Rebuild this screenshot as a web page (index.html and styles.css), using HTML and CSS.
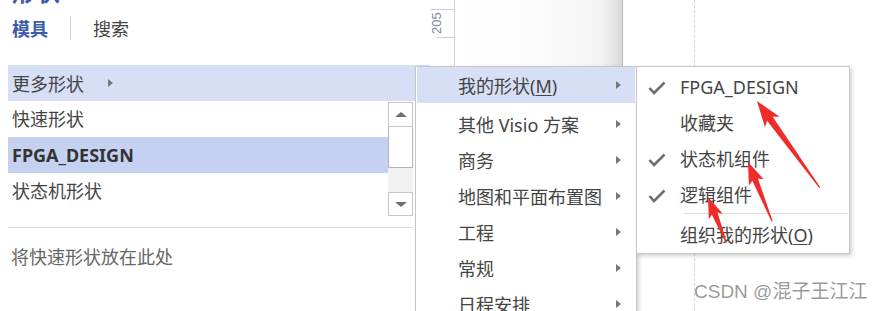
FILE: index.html
```html
<!DOCTYPE html>
<html>
<head>
	<meta charset="utf-8" />
	<title>形状</title>
	<link rel="stylesheet" href="styles.css">
</head>
<body>
	<div class="app">
		<div class="shapes">
			<div class="shapes-title">形状</div>
			<div class="tabs">
				<span class="tab active">模具</span>
				<span class="tab-sep"></span>
				<span class="tab">搜索</span>
			</div>
			<div class="more-row">更多形状<span class="tri-right"></span></div>
			<div class="stencils">
				<ul class="stencil-list">
					<li>快速形状</li>
					<li class="current">FPGA_DESIGN</li>
					<li>状态机形状</li>
				</ul>
				<div class="scrollbar">
					<div class="sb-btn"><span class="tri-up"></span></div>
					<div class="sb-thumb"></div>
					<div class="sb-track"></div>
					<div class="sb-btn"><span class="tri-down"></span></div>
				</div>
			</div>
			<div class="drop-hint">将快速形状放在此处</div>
		</div>
		<div class="ruler">
			<div class="tick"></div>
			<div class="ruler-label">205</div>
			<div class="tick short"></div>
		</div>
		<div class="page-edge"></div>
		<div class="canvas">
			<div class="guide"></div>
		</div>
	</div>

	<ul class="menu menu-main">
		<li class="hover"><span>我的形状(<u>M</u>)</span><span class="tri-right"></span></li>
		<li><span>其他 Visio 方案</span><span class="tri-right"></span></li>
		<li><span>商务</span><span class="tri-right"></span></li>
		<li><span>地图和平面布置图</span><span class="tri-right"></span></li>
		<li><span>工程</span><span class="tri-right"></span></li>
		<li><span>常规</span><span class="tri-right"></span></li>
		<li><span>日程安排</span><span class="tri-right"></span></li>
	</ul>

	<ul class="menu menu-sub">
		<li class="checked">
			<svg class="check" width="18" height="14" viewBox="0 0 18 14"><polyline points="1.5,7 6,12 16.5,1.5" /></svg>
			FPGA_DESIGN
		</li>
		<li>收藏夹</li>
		<li class="checked">
			<svg class="check" width="18" height="14" viewBox="0 0 18 14"><polyline points="1.5,7 6,12 16.5,1.5" /></svg>
			状态机组件
		</li>
		<li class="checked">
			<svg class="check" width="18" height="14" viewBox="0 0 18 14"><polyline points="1.5,7 6,12 16.5,1.5" /></svg>
			逻辑组件
		</li>
		<li class="sep"></li>
		<li>组织我的形状(<u>O</u>)</li>
	</ul>

	<svg class="marks" width="881" height="311" viewBox="0 0 881 311">
		<g transform="translate(757 101) rotate(54.1)">
			<polygon points="0,0 26,-9 22,-3.5 107,-0.6 107,0.6 22,3.5 26,9" />
		</g>
		<g transform="translate(748 162) rotate(67.9)">
			<polygon points="0,0 22,-8 19,-3 64,-0.6 64,0.6 19,3 22,8" />
		</g>
		<g transform="translate(708 197) rotate(68.2)">
			<polygon points="0,0 21,-7.5 18,-3 49,-0.6 49,0.6 18,3 21,7.5" />
		</g>
	</svg>

	<div class="watermark">CSDN @混子王江江</div>
</body>
</html>
```

FILE: styles.css
```css
body,ul,li{
	margin: 0;
	padding: 0;
}
li{
	list-style: none;
}
body{
	width: 881px;
	height: 311px;
	overflow: hidden;
	position: relative;
	background: #fff;
	color: #444;
	font-family: "Noto Sans", "Noto Sans CJK SC", sans-serif;
	font-size: 18px;
}
.app{
	display: flex;
	height: 311px;
}

/* shapes pane */
.shapes{
	width: 422px;
	padding-left: 8px;
	flex-shrink: 0;
}
.shapes-title{
	height: 24px;line-height: 24px;
	margin-top: -20px;
	padding-left: 4px;
	font-size: 24px;
	font-weight: bold;
	color: #3d5ca8;
}
.tabs{
	display: flex;
	align-items: center;
	height: 24px;
	margin-top: 12px;
	padding-left: 4px;
	font-size: 18px;
}
.tab{
	color: #444;
}
.tab.active{
	color: #3d5ca8;
	font-weight: bold;
}
.tab-sep{
	width: 1px;height: 24px;
	margin: 0 22px;
	background: #d4d4d4;
}
.more-row{
	display: flex;
	align-items: center;
	height: 36px;
	margin-top: 25px;
	padding-left: 4px;
	background: #d6dff5;
}
.more-row .tri-right{
	margin-left: 24px;
}
.tri-right{
	width: 0;height: 0;
	border-top: 4px solid transparent;
	border-bottom: 4px solid transparent;
	border-left: 5px solid #777;
}
.stencils{
	display: flex;
	width: 405px;
	height: 116px;
	border-bottom: 1px solid #dcdcdc;
	padding-bottom: 10px;
}
.stencil-list{
	width: 380px;
}
.stencil-list li{
	height: 36px;line-height: 36px;
	padding-left: 4px;
}
.stencil-list .current{
	background: #c5d1f1;
	font-weight: bold;
	color: #333;
}
.scrollbar{
	width: 25px;
	height: 114px;
	margin-top: 1px;
	display: flex;
	flex-direction: column;
}
.sb-btn{
	box-sizing: border-box;
	height: 25px;
	border: 1px solid #c6c6c6;
	background: #fff;
	display: flex;
	align-items: center;
	justify-content: center;
}
.sb-btn:last-child{
	height: 24px;
}
.tri-up{
	border-left: 6px solid transparent;
	border-right: 6px solid transparent;
	border-bottom: 5px solid #6e6e6e;
}
.tri-down{
	border-left: 6px solid transparent;
	border-right: 6px solid transparent;
	border-top: 5px solid #6e6e6e;
}
.sb-thumb{
	box-sizing: border-box;
	height: 41px;
	border: 1px solid #b4b4b4;
	border-top: 0;
	background: #fff;
}
.sb-track{
	height: 24px;
	background: #f1f1f1;
}
.drop-hint{
	margin-top: 17px;
	padding-left: 3px;
	line-height: 24px;
	color: #666;
}

/* ruler + page */
.ruler{
	width: 24px;
	flex-shrink: 0;
	padding-top: 9px;
	border-right: 1px solid #d4d4d4;
}
.tick{
	border-top: 1px solid #cfcfcf;
}
.tick.short{
	margin-left: 7px;
}
.ruler-label{
	height: 27px;
	padding-left: 2px;
	writing-mode: vertical-rl;
	transform: rotate(180deg);
	text-align: center;
	font-family: "Liberation Sans", sans-serif;
	font-size: 13px;
	line-height: 14px;
	color: #7d8aa2;
}
.page-edge{
	width: 167px;
	flex-shrink: 0;
	background: linear-gradient(to right, #fff 0%, #fbfbfb 55%, #f3f3f3 88%, #d9d9d9 100%);
	border-right: 1px solid #b9b9b9;
}
.canvas{
	flex: 1;
}
.guide{
	height: 311px;
	margin-left: 71px;
	border-left: 1px dashed #d4d4d4;
}

/* menus */
.menu{
	position: absolute;
	box-sizing: border-box;
	background: #fff;
	border: 1px solid #c6c6c6;
	box-shadow: 2px 2px 4px rgba(0,0,0,0.18);
}
.menu-main{
	left: 415px;top: 66px;
	width: 222px;height: 270px;
	padding: 0 1px;
}
.menu-main li{
	display: flex;
	align-items: center;
	justify-content: space-between;
	height: 36px;
	padding: 0 14px 0 41px;
}
.menu-main li.hover{
	background: #d6dff5;
	margin-bottom: 3px;
}
.menu-sub{
	left: 636px;top: 66px;
	width: 214px;
	padding: 2px 1px 0;
}
.menu-sub li{
	position: relative;
	height: 36px;line-height: 36px;
	padding-left: 42px;
}
.menu-sub li.sep{
	height: 0;
	margin: 0 1px 3px 46px;
	border-top: 1px solid #dcdcdc;
}
.check{
	position: absolute;
	left: 10px;top: 12px;
}
.check polyline{
	fill: none;
	stroke: #707070;
	stroke-width: 2.6;
}
u{
	text-underline-offset: 2px;
}

/* annotations */
.marks{
	position: absolute;
	left: 0;top: 0;
	pointer-events: none;
}
.marks polygon{
	fill: #f02c2a;
}
.watermark{
	position: absolute;
	left: 694px;top: 280px;
	font-family: "Liberation Sans", "Noto Sans CJK SC", sans-serif;
	font-size: 19px;
	line-height: 24px;
	color: rgba(120,120,120,0.75);
}
```
